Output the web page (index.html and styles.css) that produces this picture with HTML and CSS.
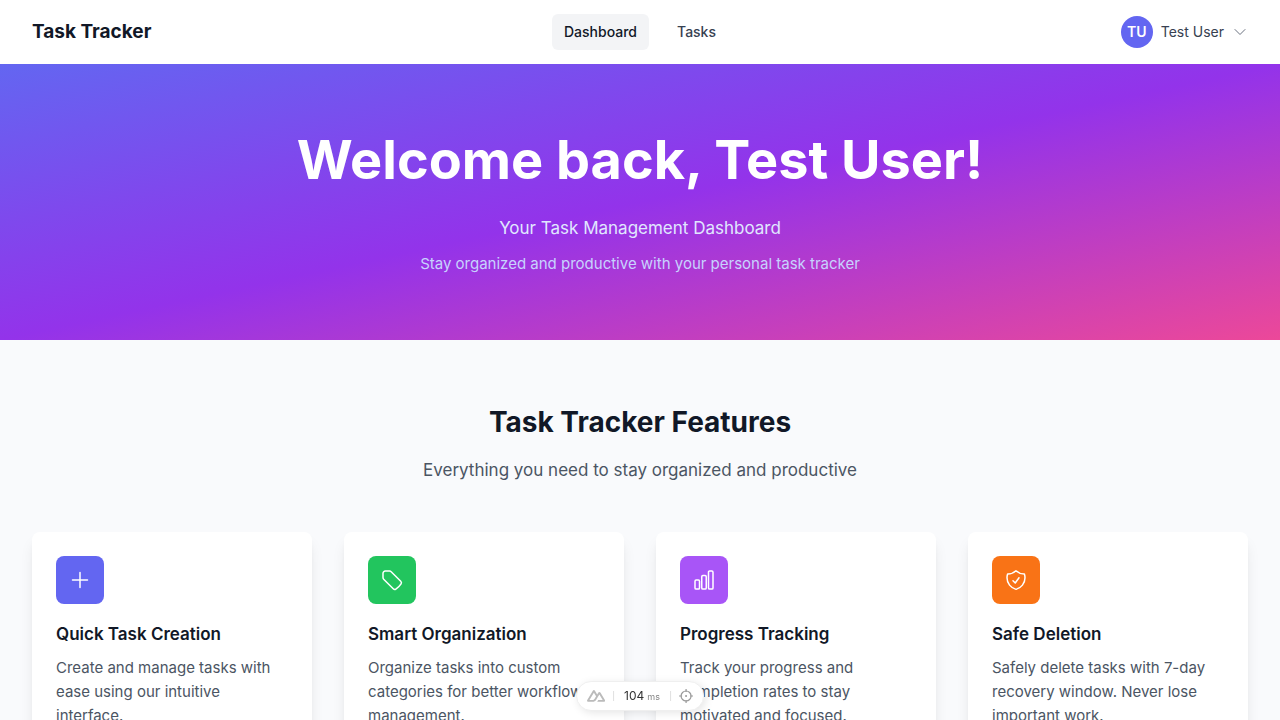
FILE: index.html
```html
<!DOCTYPE html>
<html lang="en">
<head>
<meta charset="utf-8">
<meta name="viewport" content="width=device-width, initial-scale=1">
<title>Task Tracker</title>
<link rel="stylesheet" href="styles.css">
</head>
<body>
<header class="topbar">
  <a class="brand" href="#">Task Tracker</a>
  <nav class="nav" aria-label="Main">
    <a class="nav-link nav-link-active" href="#" aria-current="page">Dashboard</a>
    <a class="nav-link" href="#">Tasks</a>
  </nav>
  <button class="user-menu" type="button" aria-haspopup="menu">
    <span class="avatar">TU</span>
    <span>Test User</span>
    <svg class="chevron" viewBox="0 0 24 24" aria-hidden="true"><path d="m19.5 8.25-7.5 7.5-7.5-7.5"/></svg>
  </button>
</header>

<main>
  <section class="hero">
    <h1 class="hero-title">Welcome back, Test User!</h1>
    <p class="hero-lead">Your Task Management Dashboard</p>
    <p class="hero-note">Stay organized and productive with your personal task tracker</p>
  </section>

  <section class="features">
    <h2 class="features-title">Task Tracker Features</h2>
    <p class="features-lead">Everything you need to stay organized and productive</p>
    <div class="cards">
      <article class="card">
        <div class="card-icon card-icon-indigo">
          <svg class="glyph" viewBox="0 0 24 24" aria-hidden="true"><path d="M12 4.5v15m7.5-7.5h-15"/></svg>
        </div>
        <h3 class="card-title">Quick Task Creation</h3>
        <p class="card-text">Create and manage tasks with ease using our intuitive interface.</p>
      </article>
      <article class="card">
        <div class="card-icon card-icon-green">
          <svg class="glyph" viewBox="0 0 24 24" aria-hidden="true"><path d="M9.568 3H5.25A2.25 2.25 0 0 0 3 5.25v4.318c0 .597.237 1.17.659 1.591l9.581 9.581c.699.699 1.78.872 2.607.33a18.095 18.095 0 0 0 5.223-5.223c.542-.827.369-1.908-.33-2.607L11.16 3.66A2.25 2.25 0 0 0 9.568 3Z"/></svg>
        </div>
        <h3 class="card-title">Smart Organization</h3>
        <p class="card-text">Organize tasks into custom categories for better workflow management.</p>
      </article>
      <article class="card">
        <div class="card-icon card-icon-purple">
          <svg class="glyph" viewBox="0 0 24 24" aria-hidden="true"><path d="M3 13.125C3 12.504 3.504 12 4.125 12h2.25c.621 0 1.125.504 1.125 1.125v6.75C7.5 20.496 6.996 21 6.375 21h-2.25A1.125 1.125 0 0 1 3 19.875v-6.75ZM9.75 8.625c0-.621.504-1.125 1.125-1.125h2.25c.621 0 1.125.504 1.125 1.125v11.25c0 .621-.504 1.125-1.125 1.125h-2.25a1.125 1.125 0 0 1-1.125-1.125V8.625ZM16.5 4.125c0-.621.504-1.125 1.125-1.125h2.25C20.496 3 21 3.504 21 4.125v15.75c0 .621-.504 1.125-1.125 1.125h-2.25a1.125 1.125 0 0 1-1.125-1.125V4.125Z"/></svg>
        </div>
        <h3 class="card-title">Progress Tracking</h3>
        <p class="card-text">Track your progress and completion rates to stay motivated and focused.</p>
      </article>
      <article class="card">
        <div class="card-icon card-icon-orange">
          <svg class="glyph" viewBox="0 0 24 24" aria-hidden="true"><path d="M9 12.75 11.25 15 15 9.75m-3-7.036A11.959 11.959 0 0 1 3.598 6 11.99 11.99 0 0 0 3 9.749c0 5.592 3.824 10.29 9 11.623 5.176-1.332 9-6.03 9-11.622 0-1.31-.21-2.571-.598-3.751h-.152c-3.196 0-6.1-1.248-8.25-3.285Z"/></svg>
        </div>
        <h3 class="card-title">Safe Deletion</h3>
        <p class="card-text">Safely delete tasks with 7-day recovery window. Never lose important work.</p>
      </article>
    </div>
  </section>
</main>

<div class="devtools">
  <button class="devtools-button" type="button" aria-label="Toggle devtools">
    <svg class="devtools-logo" viewBox="0 0 24 24" aria-hidden="true"><path d="M13.464 19.83h8.922c.283 0 .562-.073.807-.21a1.59 1.59 0 0 0 .591-.574 1.53 1.53 0 0 0 0-1.566L17.792 7.414a1.59 1.59 0 0 0-.591-.573 1.652 1.652 0 0 0-1.614 0 1.59 1.59 0 0 0-.591.573L13.464 9.99l-2.995-5.037a1.591 1.591 0 0 0-.591-.573 1.653 1.653 0 0 0-1.614 0 1.591 1.591 0 0 0-.591.573L.217 17.481a1.53 1.53 0 0 0 0 1.566 1.59 1.59 0 0 0 .59.573c.246.137.524.21.808.21h5.6c2.219 0 3.855-.946 4.981-2.79l2.734-4.593 1.464-2.457 4.394 7.383h-5.859l-1.465 2.457Zm-6.341-2.46-3.908-.001 5.859-9.843 2.923 4.922-1.957 3.289c-.748 1.197-1.597 1.633-2.917 1.633Z"/></svg>
  </button>
  <span class="devtools-divider"></span>
  <span class="devtools-time">104 <small class="devtools-unit">ms</small></span>
  <span class="devtools-divider"></span>
  <button class="devtools-button" type="button" aria-label="Toggle component inspector">
    <svg class="devtools-target" viewBox="0 0 14 14" aria-hidden="true"><circle cx="7" cy="7" r="5"/><path d="M7 0v3M7 11v3M0 7h3M11 7h3"/><circle class="devtools-dot" cx="7" cy="7" r="1"/></svg>
  </button>
</div>
</body>
</html>
```

FILE: styles.css
```css
* {
  box-sizing: border-box;
}

body {
  margin: 0;
  background: #f9fafc;
  color: #111827;
  font-family: Inter, "Liberation Sans", sans-serif;
  font-size: 15px;
  line-height: 24px;
}

h1, h2, h3, p {
  margin: 0;
}

button {
  padding: 0;
  border: 0;
  background: none;
  color: inherit;
  font: inherit;
  cursor: pointer;
}

a {
  color: inherit;
  text-decoration: none;
}

.topbar {
  display: grid;
  grid-template-columns: 1fr auto 1fr;
  align-items: center;
  height: 64px;
  padding: 0 32px;
  background: #fff;
}

.brand {
  justify-self: start;
  font-size: 19px;
  font-weight: 700;
  line-height: 28px;
}

.nav {
  display: flex;
  gap: 16px;
}

.nav-link {
  padding: 8px 12px;
  border-radius: 6px;
  color: #374151;
  font-size: 14px;
  font-weight: 500;
  line-height: 20px;
}

.nav-link-active {
  background: #f3f4f6;
  color: #111827;
}

.user-menu {
  display: flex;
  align-items: center;
  justify-self: end;
  gap: 8px;
  color: #374151;
  font-size: 14px;
  line-height: 20px;
}

.avatar {
  display: grid;
  place-items: center;
  width: 32px;
  height: 32px;
  border-radius: 50%;
  background: #6366f1;
  color: #fff;
  font-weight: 600;
}

.chevron {
  width: 16px;
  height: 16px;
  fill: none;
  stroke: #6b7280;
  stroke-width: 1.5;
  stroke-linecap: round;
  stroke-linejoin: round;
}

.hero {
  padding: 64px 32px;
  background: linear-gradient(to bottom right, #6366f1, #9333ea, #ec4899);
  text-align: center;
}

.hero-title {
  color: #fff;
  font-size: 54px;
  font-weight: 700;
  line-height: 64px;
}

.hero-lead {
  margin-top: 20px;
  color: #e0e7ff;
  font-size: 17px;
  line-height: 32px;
}

.hero-note {
  margin-top: 8px;
  color: #c7d2fe;
}

.features {
  padding: 64px 32px;
  text-align: center;
}

.features-title {
  font-size: 28px;
  font-weight: 700;
  line-height: 36px;
}

.features-lead {
  margin-top: 16px;
  color: #4b5563;
  font-size: 17px;
  line-height: 28px;
}

.cards {
  display: grid;
  grid-template-columns: repeat(auto-fit, minmax(240px, 1fr));
  gap: 32px;
  margin-top: 48px;
  text-align: left;
}

.card {
  padding: 24px;
  border-radius: 8px;
  background: #fff;
  box-shadow: 0 10px 15px -3px rgb(0 0 0 / 0.1), 0 4px 6px -4px rgb(0 0 0 / 0.1);
}

.card-icon {
  display: grid;
  place-items: center;
  width: 48px;
  height: 48px;
  border-radius: 8px;
}

.card-icon-indigo { background: #6366f1; }
.card-icon-green { background: #22c55e; }
.card-icon-purple { background: #a855f7; }
.card-icon-orange { background: #f97316; }

.glyph {
  width: 24px;
  height: 24px;
  fill: none;
  stroke: #fff;
  stroke-width: 1.5;
  stroke-linecap: round;
  stroke-linejoin: round;
}

.card-title {
  margin-top: 16px;
  font-size: 17px;
  font-weight: 600;
  line-height: 28px;
}

.card-text {
  margin-top: 8px;
  color: #4b5563;
}

.devtools {
  position: fixed;
  bottom: 9px;
  left: 50%;
  display: flex;
  align-items: center;
  gap: 8px;
  height: 30px;
  padding: 0 10px;
  border: 1px solid #efefef;
  border-radius: 15px;
  background: #fff;
  box-shadow: 2px 2px 8px rgb(0 0 0 / 0.1);
  transform: translateX(-50%);
}

.devtools-button {
  display: flex;
}

.devtools-logo {
  width: 18px;
  height: 18px;
  fill: #bbb;
}

.devtools-divider {
  width: 1px;
  height: 10px;
  background: #e0e0e0;
}

.devtools-time {
  display: flex;
  align-items: baseline;
  gap: 3px;
  padding: 0 2px;
  color: #333;
  font-size: 12px;
  line-height: 16px;
}

.devtools-unit {
  color: #888;
  font-size: 9px;
}

.devtools-target {
  width: 14px;
  height: 14px;
  fill: none;
  stroke: #999;
  stroke-width: 1.2;
}

.devtools-dot {
  fill: #999;
  stroke: none;
}
```
